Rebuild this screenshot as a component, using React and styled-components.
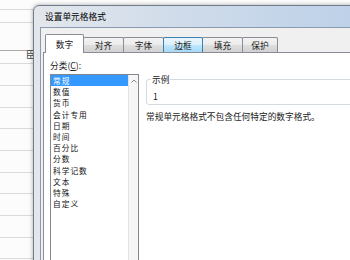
import React from "react";
import styled, { createGlobalStyle } from "styled-components";

const GlobalStyle = createGlobalStyle`
  html, body { margin: 0; padding: 0; background: #fff; }
  body { font-family: "Noto Sans CJK SC", "Noto Sans", sans-serif; }
`;

const Page = styled.div`
  position: relative;
  width: 350px;
  height: 260px;
  overflow: hidden;
  background: #fcfcfc;
`;

const Sheet = styled.div`
  display: flex;
  flex-direction: column;
`;

const SheetRow = styled.div`
  flex-shrink: 0;
  box-sizing: border-box;
  height: ${(p) => p.$h}px;
  border-bottom: 1px solid ${(p) => (p.$dark ? "#a9a9a9" : "#dadada")};
`;

const CellText = styled.span`
  position: absolute;
  left: 26px;
  top: 49px;
  font-size: 9px;
  line-height: 11px;
  color: #444;
`;

const Dialog = styled.div`
  position: absolute;
  left: 33px;
  top: 5px;
  width: 400px;
  height: 300px;
  box-sizing: border-box;
  border: 1px solid #6f7d8f;
  border-radius: 6px 6px 0 0;
  padding: 0 6px;
  background: linear-gradient(to right, #e3e7ec 0%, #d0dcea 35%, #b5cce8 100%);
  box-shadow: 0 0 4px rgba(0, 0, 0, 0.35);
  display: flex;
  flex-direction: column;
`;

const TitleBar = styled.div`
  flex-shrink: 0;
  height: 21px;
  display: flex;
  align-items: center;
  padding-left: 5px;
  font-size: 8.7px;
  color: #000;
`;

const Client = styled.div`
  flex: 1;
  display: flex;
  flex-direction: column;
  border: 1px solid #8a9bb0;
  border-bottom: none;
  background: #f0f0f0;
  padding: 6px 0 0 2px;
`;

const TabRow = styled.div`
  position: relative;
  z-index: 1;
  display: flex;
  align-items: flex-end;
  margin-left: 2px;
`;

const tabBg = {
  selected: "#fff",
  hover: "linear-gradient(#eaf6fd, #d9f0fc 50%, #bee6fd 50%, #a7d9f5)",
  normal: "linear-gradient(#f3f3f3, #ebebeb 50%, #dedede 50%, #d2d2d2)",
};

const Tab = styled.div`
  position: relative;
  z-index: ${(p) => (p.$variant === "selected" ? 3 : p.$variant === "hover" ? 2 : 1)};
  box-sizing: border-box;
  width: ${(p) => p.$w}px;
  height: ${(p) => (p.$variant === "selected" ? 19 : 15)}px;
  margin-bottom: ${(p) => (p.$variant === "selected" ? -1 : 0)}px;
  margin-left: ${(p) => (p.$first ? 0 : -1)}px;
  border: 1px solid ${(p) => (p.$variant === "hover" ? "#3c7fb1" : "#898c95")};
  border-bottom: none;
  border-radius: 2px 2px 0 0;
  background: ${(p) => tabBg[p.$variant]};
  display: flex;
  align-items: center;
  justify-content: center;
  font-size: 8.7px;
  color: #1a1a1a;
`;

const Panel = styled.div`
  flex: 1;
  background: #fff;
  border: 1px solid #898c95;
  border-right: none;
  border-bottom: none;
  padding: 7px 0 0 6px;
  display: grid;
  grid-template-columns: 89px 1fr;
  grid-template-rows: auto 1fr;
  column-gap: 7px;
  row-gap: 3px;
  align-items: start;
`;

const Label = styled.div`
  grid-column: 1 / 3;
  font-size: 8.7px;
  line-height: 11px;
  color: #222;
  u { text-decoration: underline; }
`;

const ListBox = styled.div`
  grid-column: 1;
  grid-row: 2;
  box-sizing: border-box;
  height: 200px;
  border: 1px solid #828790;
  display: flex;
`;

const Items = styled.div`
  flex: 1;
  display: flex;
  flex-direction: column;
`;

const Item = styled.div`
  height: 11.2px;
  line-height: 11.2px;
  padding-left: 2px;
  font-size: 7.7px;
  letter-spacing: 1px;
  white-space: nowrap;
  background: ${(p) => (p.$selected ? "#3399ff" : "transparent")};
  color: ${(p) => (p.$selected ? "#fff" : "#111")};
`;

const ScrollTrack = styled.div`
  width: 10px;
  box-sizing: border-box;
  background: #f6f6f6;
  border-left: 1px solid #e4e4e4;
  display: flex;
  flex-direction: column;
  align-items: center;
  padding-top: 4px;
`;

const RightCol = styled.div`
  grid-column: 2;
  grid-row: 2;
  display: flex;
  flex-direction: column;
`;

const Sample = styled.fieldset`
  margin: 0;
  min-width: 0;
  padding: 6px 6px 2px 6px;
  border: 1px solid #d3dae0;
  border-radius: 3px;
`;

const Legend = styled.legend`
  padding: 0 1px;
  margin-left: -2px;
  font-size: 8.7px;
  line-height: 11px;
  color: #222;
`;

const SampleValue = styled.div`
  font-size: 8.7px;
  line-height: 11px;
  height: 11px;
  color: #1a1a1a;
`;

const Desc = styled.div`
  margin-top: 6px;
  font-size: 8.7px;
  line-height: 11px;
  white-space: nowrap;
  color: #222;
`;

const rows = [
  [10], [13], [28, true], [13], [22], [22], [21], [22], [22], [21], [22], [22], [21],
];

const tabs = [
  ["数字", 39, "selected"],
  ["对齐", 41, "normal"],
  ["字体", 41, "normal"],
  ["边框", 40, "hover"],
  ["填充", 41, "normal"],
  ["保护", 36, "normal"],
];

const categories = [
  "常规", "数值", "货币", "会计专用", "日期", "时间",
  "百分比", "分数", "科学记数", "文本", "特殊", "自定义",
];

export default function App() {
  return (
    <Page>
      <GlobalStyle />
      <Sheet>
        {rows.map(([h, dark], i) => (
          <SheetRow key={i} $h={h} $dark={dark} />
        ))}
      </Sheet>
      <CellText>臣</CellText>
      <Dialog>
        <TitleBar>设置单元格格式</TitleBar>
        <Client>
          <TabRow>
            {tabs.map(([t, w, v], i) => (
              <Tab key={t} $w={w} $variant={v} $first={i === 0}>
                {t}
              </Tab>
            ))}
          </TabRow>
          <Panel>
            <Label>
              分类(<u>C</u>):
            </Label>
            <ListBox>
              <Items>
                {categories.map((c, i) => (
                  <Item key={c} $selected={i === 0}>
                    {c}
                  </Item>
                ))}
              </Items>
              <ScrollTrack>
                <svg width="6" height="4" viewBox="0 0 6 4">
                  <polyline points="0.5,3.5 3,1 5.5,3.5" fill="none" stroke="#8a8a8a" strokeWidth="1" />
                </svg>
              </ScrollTrack>
            </ListBox>
            <RightCol>
              <Sample>
                <Legend>示例</Legend>
                <SampleValue>1</SampleValue>
              </Sample>
              <Desc>常规单元格格式不包含任何特定的数字格式。</Desc>
            </RightCol>
          </Panel>
        </Client>
      </Dialog>
    </Page>
  );
}
